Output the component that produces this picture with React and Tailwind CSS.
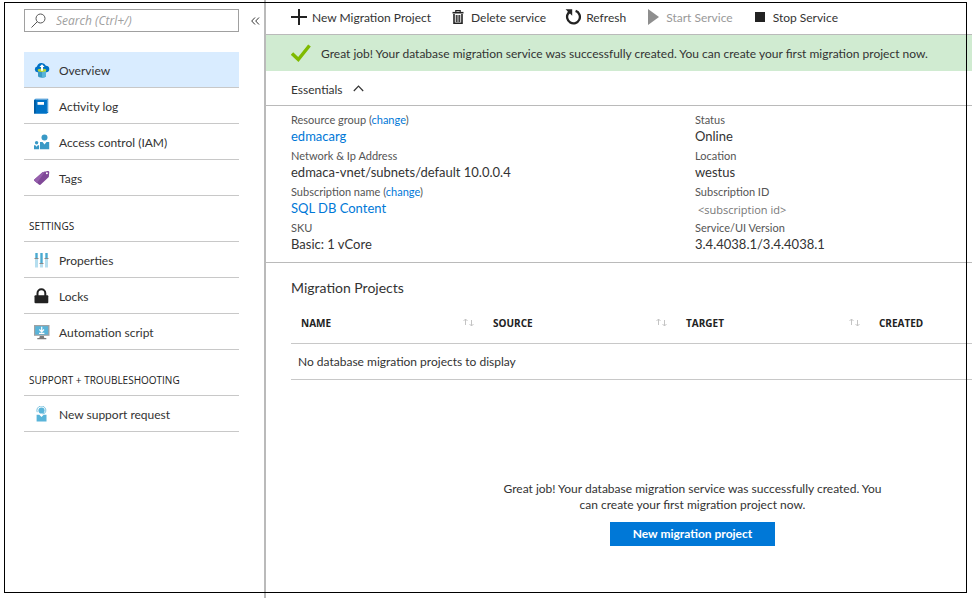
const FONT = "font-['Lato','Open_Sans','Noto_Sans',sans-serif]";

function OverviewIcon() {
  return (
    <svg width="16" height="16" viewBox="0 0 16 16">
      <path d="M3.4 10.2A2.9 2.9 0 0 1 3 4.500 4.800 4.800 0 0 1 11.900 3.700 3.300 3.300 0 0 1 12.800 10.200Z" fill="#0072c6" />
      <path d="M4 8v6c0 1 1.800 1.700 4 1.700s4-.7 4-1.700V8Z" fill="#3999c6" />
      <path d="M8 8v7.700c2.200 0 4-.7 4-1.700V8Z" fill="#59b4d9" />
      <ellipse cx="8" cy="8.300" rx="4.300" ry="1.700" fill="#b8d432" />
      <path d="M8 2.200 10.600 5H9v3.800H7V5H5.400Z" fill="#fff" />
    </svg>
  );
}

function LogIcon() {
  return (
    <svg width="16" height="16" viewBox="0 0 16 16">
      <path d="M0 2 1.500 .7H14.200v13.500L13 15.500H0Z" fill="#0072c6" />
      <path d="M.8 1.900 1.800 1.200H13.700v12.500l-.9.8V1.900Z" fill="#7fb8e2" />
      <path d="M1.800 2H12.700V15.500H1.800Z" fill="#0072c6" />
      <path d="M0 2.200h1.800V15.500H0Z" fill="#005ba1" />
      <rect x="3.500" y="4" width="6.500" height="2.800" fill="#fff" />
    </svg>
  );
}

function AccessIcon() {
  return (
    <svg width="16" height="16" viewBox="0 0 16 16" fill="#3999c6">
      <circle cx="10.500" cy="3.400" r="3" />
      <path d="M6 8h2.500l2 2.600L12.500 8h2.700v7.200H6Z" />
      <circle cx="2.600" cy="8.700" r="1.700" />
      <path d="M0 11.200h1.300l1.300 1.500 1.200-1.500h1.300v4H0Z" />
    </svg>
  );
}

function TagIcon() {
  return (
    <svg width="16" height="16" viewBox="0 0 16 16">
      <path d="M.3 9.600 8.500 2.200 13.600.9q1.600-.2 1.700 1.200l-.5 5L6.500 14.700q-.9.700-1.700-.1L.3 10.800q-.5-.6 0-1.200Z" fill="#804998" />
      <path d="M.3 9.600 8.500 2.200 11 1.600 3 13.100.3 10.800q-.5-.6 0-1.200Z" fill="#955fac" />
      <circle cx="12.900" cy="3.200" r="1" fill="#fff" />
    </svg>
  );
}

function PropertiesIcon() {
  return (
    <svg width="16" height="16" viewBox="0 0 16 16">
      <g fill="#b5deef">
        <rect x="1" y="1" width="3" height="14.500" />
        <rect x="6" y="1" width="3" height="14.500" />
        <rect x="11" y="1" width="3" height="14.500" />
      </g>
      <g fill="#4ba9d0">
        <rect x="1.500" y="1" width="2" height="5" />
        <rect x="6.500" y="1" width="2" height="10" />
        <rect x="11.500" y="1" width="2" height="5" />
      </g>
      <g fill="#8a8a8a">
        <rect x=".5" y="6" width="4" height="1" />
        <rect x="5.500" y="11" width="4" height="1" />
        <rect x="10.500" y="6" width="4" height="1" />
      </g>
    </svg>
  );
}

function LockIcon() {
  return (
    <svg width="16" height="16" viewBox="0 0 16 16">
      <path d="M3.500 8V5.300a3.900 4 0 0 1 7.800 0V8" fill="none" stroke="#222" strokeWidth="2" />
      <rect x=".5" y="7.300" width="13.800" height="7.900" rx="1" fill="#222" />
    </svg>
  );
}

function ScriptIcon() {
  return (
    <svg width="16" height="16" viewBox="0 0 16 16">
      <rect x="0" y="1" width="15.500" height="10.800" fill="#a0a1a2" />
      <rect x="1.200" y="2.200" width="13" height="8.400" fill="#59b4d9" />
      <path d="M5.800 12h4l.5 2h2v1.300h-9V14h2Z" fill="#7a7a7a" />
      <path d="M7.700 2.800v4.800M5.400 5.500 7.700 7.800 10 5.500M5 9.400h5.400" fill="none" stroke="#fff" strokeWidth="1.200" />
    </svg>
  );
}

function SupportIcon() {
  return (
    <svg width="16" height="16" viewBox="0 0 16 16">
      <circle cx="7.500" cy="4.500" r="3.100" fill="#59b4d9" />
      <path d="M3.200 6.200A4.500 4.500 0 1 1 11.800 5.200Q11.500 7.700 8.500 8" fill="none" stroke="#7cc3e0" strokeWidth="1" />
      <path d="M2.600 8.700h2.700L7.500 11.100 9.700 8.700h2.800v6.700H2.600Z" fill="#59b4d9" />
    </svg>
  );
}

function PlusIcon() {
  return (
    <svg width="16" height="16" viewBox="0 0 16 16">
      <path d="M8 0v16M0 8h16" stroke="#222" strokeWidth="2" />
    </svg>
  );
}

function TrashIcon() {
  return (
    <svg width="16" height="16" viewBox="0 0 16 16" fill="none" stroke="#222">
      <path d="M2.500 3.700h11" strokeWidth="1.600" />
      <path d="M5.800 3V1.700h4.400V3" strokeWidth="1.200" />
      <path d="M4 5v9.200h8V5" strokeWidth="1.600" />
      <path d="M6.300 6v7M8 6v7M9.700 6v7" strokeWidth="1.100" />
    </svg>
  );
}

function RefreshIcon() {
  return (
    <svg width="16" height="16" viewBox="0 0 16 16">
      <path d="M10.600 1.900A6.400 6.400 0 1 1 3.300 4.200" fill="none" stroke="#222" strokeWidth="2.300" />
      <path d="M.6.200h6.600v6.600L5 4.600 3.800 5.600 2.400 3.800 2.800 2.400Z" fill="#222" />
    </svg>
  );
}

function PlayIcon() {
  return (
    <svg width="16" height="16" viewBox="0 0 16 16">
      <path d="M3 0 14 8 3 16Z" fill="#8e8e8e" />
    </svg>
  );
}

function StopIcon() {
  return (
    <svg width="16" height="16" viewBox="0 0 16 16">
      <rect x="3" y="3" width="10" height="10" fill="#222" />
    </svg>
  );
}

function SortIcon() {
  return (
    <svg width="11" height="9" viewBox="0 0 11 9" fill="none" stroke="#c4c4c4">
      <path d="M2.500 7V1M.5 3 2.500 1l2 2M8.500 2v6M6.500 6l2 2 2-2" />
    </svg>
  );
}

const GROUPS = [
  {
    items: [
      { label: "Overview", Icon: OverviewIcon, active: true },
      { label: "Activity log", Icon: LogIcon },
      { label: "Access control (IAM)", Icon: AccessIcon },
      { label: "Tags", Icon: TagIcon },
    ],
  },
  {
    title: "SETTINGS",
    items: [
      { label: "Properties", Icon: PropertiesIcon },
      { label: "Locks", Icon: LockIcon },
      { label: "Automation script", Icon: ScriptIcon },
    ],
  },
  {
    title: "SUPPORT + TROUBLESHOOTING",
    items: [{ label: "New support request", Icon: SupportIcon }],
  },
];

const ACTIONS = [
  { label: "New Migration Project", Icon: PlusIcon },
  { label: "Delete service", Icon: TrashIcon },
  { label: "Refresh", Icon: RefreshIcon },
  { label: "Start Service", Icon: PlayIcon, disabled: true },
  { label: "Stop Service", Icon: StopIcon },
];

const LEFT = [
  { label: "Resource group", change: true, value: "edmacarg", link: true },
  { label: "Network & Ip Address", value: "edmaca-vnet/subnets/default 10.0.0.4" },
  { label: "Subscription name", change: true, value: "SQL DB Content", link: true },
  { label: "SKU", value: "Basic: 1 vCore" },
];

const RIGHT = [
  { label: "Status", value: "Online" },
  { label: "Location", value: "westus" },
  { label: "Subscription ID", value: "<subscription id>", placeholder: true },
  { label: "Service/UI Version", value: "3.4.4038.1/3.4.4038.1" },
];

function Sidebar() {
  return (
    <aside className="w-[266px] shrink-0 border-r-2 border-[#bababa] pl-6 pt-[9px]">
      <div className="flex items-center">
        <div className="flex h-[23px] w-[215px] items-center border border-[#a0a0a0] pl-[6px]">
          <svg width="15" height="15" viewBox="0 0 15 15" fill="none" stroke="#555">
            <circle cx="9.500" cy="5.500" r="4.500" />
            <path d="M6.300 8.700.5 14.500" />
          </svg>
          <input
            type="text"
            aria-label="Search"
            placeholder="Search (Ctrl+/)"
            className="min-w-0 flex-1 pl-[10px] font-['Open_Sans',sans-serif] text-xs italic outline-none placeholder:text-[#a0a0a0]"
          />
        </div>
        <button type="button" aria-label="Collapse menu" className="ml-3">
          <svg width="9" height="8" viewBox="0 0 9 8" fill="none" stroke="#333">
            <path d="M4 .5.700 4 4 7.500M8 .5 4.700 4 8 7.500" />
          </svg>
        </button>
      </div>
      <nav className="mt-5 w-[215px]">
        {GROUPS.map((group, i) => (
          <section key={i}>
            {group.title && (
              <h2 className="flex h-[46px] items-end border-b border-[#c8c8c8] pb-[7px] pl-[5px] font-['Open_Sans',sans-serif] text-[10px] leading-4 text-[#222]">
                {group.title}
              </h2>
            )}
            <ul>
              {group.items.map(({ label, Icon, active }) => (
                <li key={label}>
                  <a
                    href="#"
                    className={
                      "flex h-9 items-center gap-[9px] border-b border-[#c8c8c8] pl-[10px] pt-px " +
                      (active ? "bg-[#d9ecff]" : "")
                    }
                  >
                    <Icon />
                    <span className="pt-[2px]">{label}</span>
                  </a>
                </li>
              ))}
            </ul>
          </section>
        ))}
      </nav>
    </aside>
  );
}

function Fields({ items }) {
  return (
    <dl className="flex flex-col gap-1">
      {items.map((f) => (
        <div key={f.label}>
          <dt className="text-[11px] leading-4 text-[#555]">
            {f.label}
            {f.change && (
              <>
                {" ("}
                <a href="#" className="text-[#0078d7]">change</a>)
              </>
            )}
          </dt>
          <dd
            className={
              "leading-4 " +
              (f.placeholder
                ? "-mb-[2px] pl-[3px] pt-[2px] font-['Open_Sans',sans-serif] text-[11px] text-[#777]"
                : "text-[13px]")
            }
          >
            {f.link ? <a href="#" className="text-[#0078d7]">{f.value}</a> : f.value}
          </dd>
        </div>
      ))}
    </dl>
  );
}

export default function App() {
  return (
    <div className={"relative flex min-h-screen overflow-hidden bg-white text-xs text-[#333] " + FONT}>
      <Sidebar />
      <main className="min-w-0 flex-1">
        <div className="flex h-[35px] items-center gap-[19px] border-b border-[#bababa] pl-[25px]">
          {ACTIONS.map(({ label, Icon, disabled }) => (
            <button
              key={label}
              type="button"
              disabled={disabled}
              className="flex items-center gap-[5px] whitespace-nowrap disabled:text-[#999]"
            >
              <Icon />
              <span className="pt-[2px]">{label}</span>
            </button>
          ))}
        </div>
        <div className="flex h-9 items-center gap-[10px] bg-[#d0ebd1] pl-[25px]" role="status">
          <svg width="20" height="18" viewBox="0 0 20 18">
            <path d="M1 9.500 7.300 15.500 18.500 1.500" fill="none" stroke="#7fba00" strokeWidth="3.400" />
          </svg>
          <p className="pt-[2px]">
            Great job! Your database migration service was successfully created. You can create your first migration project now.
          </p>
        </div>
        <button type="button" className="flex h-[35px] w-full items-center gap-[10px] border-b border-[#bababa] pl-[25px]">
          <span className="pt-1">Essentials</span>
          <svg width="11" height="7" viewBox="0 0 11 7" fill="none" stroke="#333" strokeWidth="1.200">
            <path d="M.8 6 5.500 1.200 10.200 6" />
          </svg>
        </button>
        <div className="grid grid-cols-[404px_1fr] border-b border-[#bababa] pb-[10px] pl-[25px] pt-[6px]">
          <Fields items={LEFT} />
          <Fields items={RIGHT} />
        </div>
        <section className="pl-[25px] pt-[15px]">
          <h1 className="text-sm leading-5">Migration Projects</h1>
          <table className="mt-[5px] w-full table-fixed border-collapse text-left">
            <colgroup>
              <col className="w-[192px]" />
              <col className="w-[193px]" />
              <col className="w-[193px]" />
              <col />
            </colgroup>
            <thead>
              <tr className="h-10 border-b border-[#c8c8c8] font-['Open_Sans',sans-serif] text-[10px] text-[#222]">
                {["NAME", "SOURCE", "TARGET"].map((name) => (
                  <th key={name} className="pl-[10px] pr-[9px] font-bold">
                    <div className="flex items-center justify-between">
                      <span className="pt-[2px]">{name}</span>
                      <SortIcon />
                    </div>
                  </th>
                ))}
                <th className="pl-[10px] pt-[2px] font-bold">CREATED</th>
              </tr>
            </thead>
            <tbody>
              <tr className="h-9 border-b border-[#c8c8c8]">
                <td colSpan={4} className="pl-[7px] pt-[2px]">No database migration projects to display</td>
              </tr>
            </tbody>
          </table>
        </section>
        <div className="mt-[101px] flex flex-col items-center pl-[147px]">
          <p className="w-[390px] text-center leading-4">
            Great job! Your database migration service was successfully created. You can create your first migration project now.
          </p>
          <button type="button" className="mt-[9px] h-6 w-[165px] bg-[#0078d7] pt-px font-bold text-white">
            New migration project
          </button>
        </div>
      </main>
      <div className="pointer-events-none absolute bottom-[5px] left-1 right-[5px] top-[2px] border border-black" />
    </div>
  );
}
